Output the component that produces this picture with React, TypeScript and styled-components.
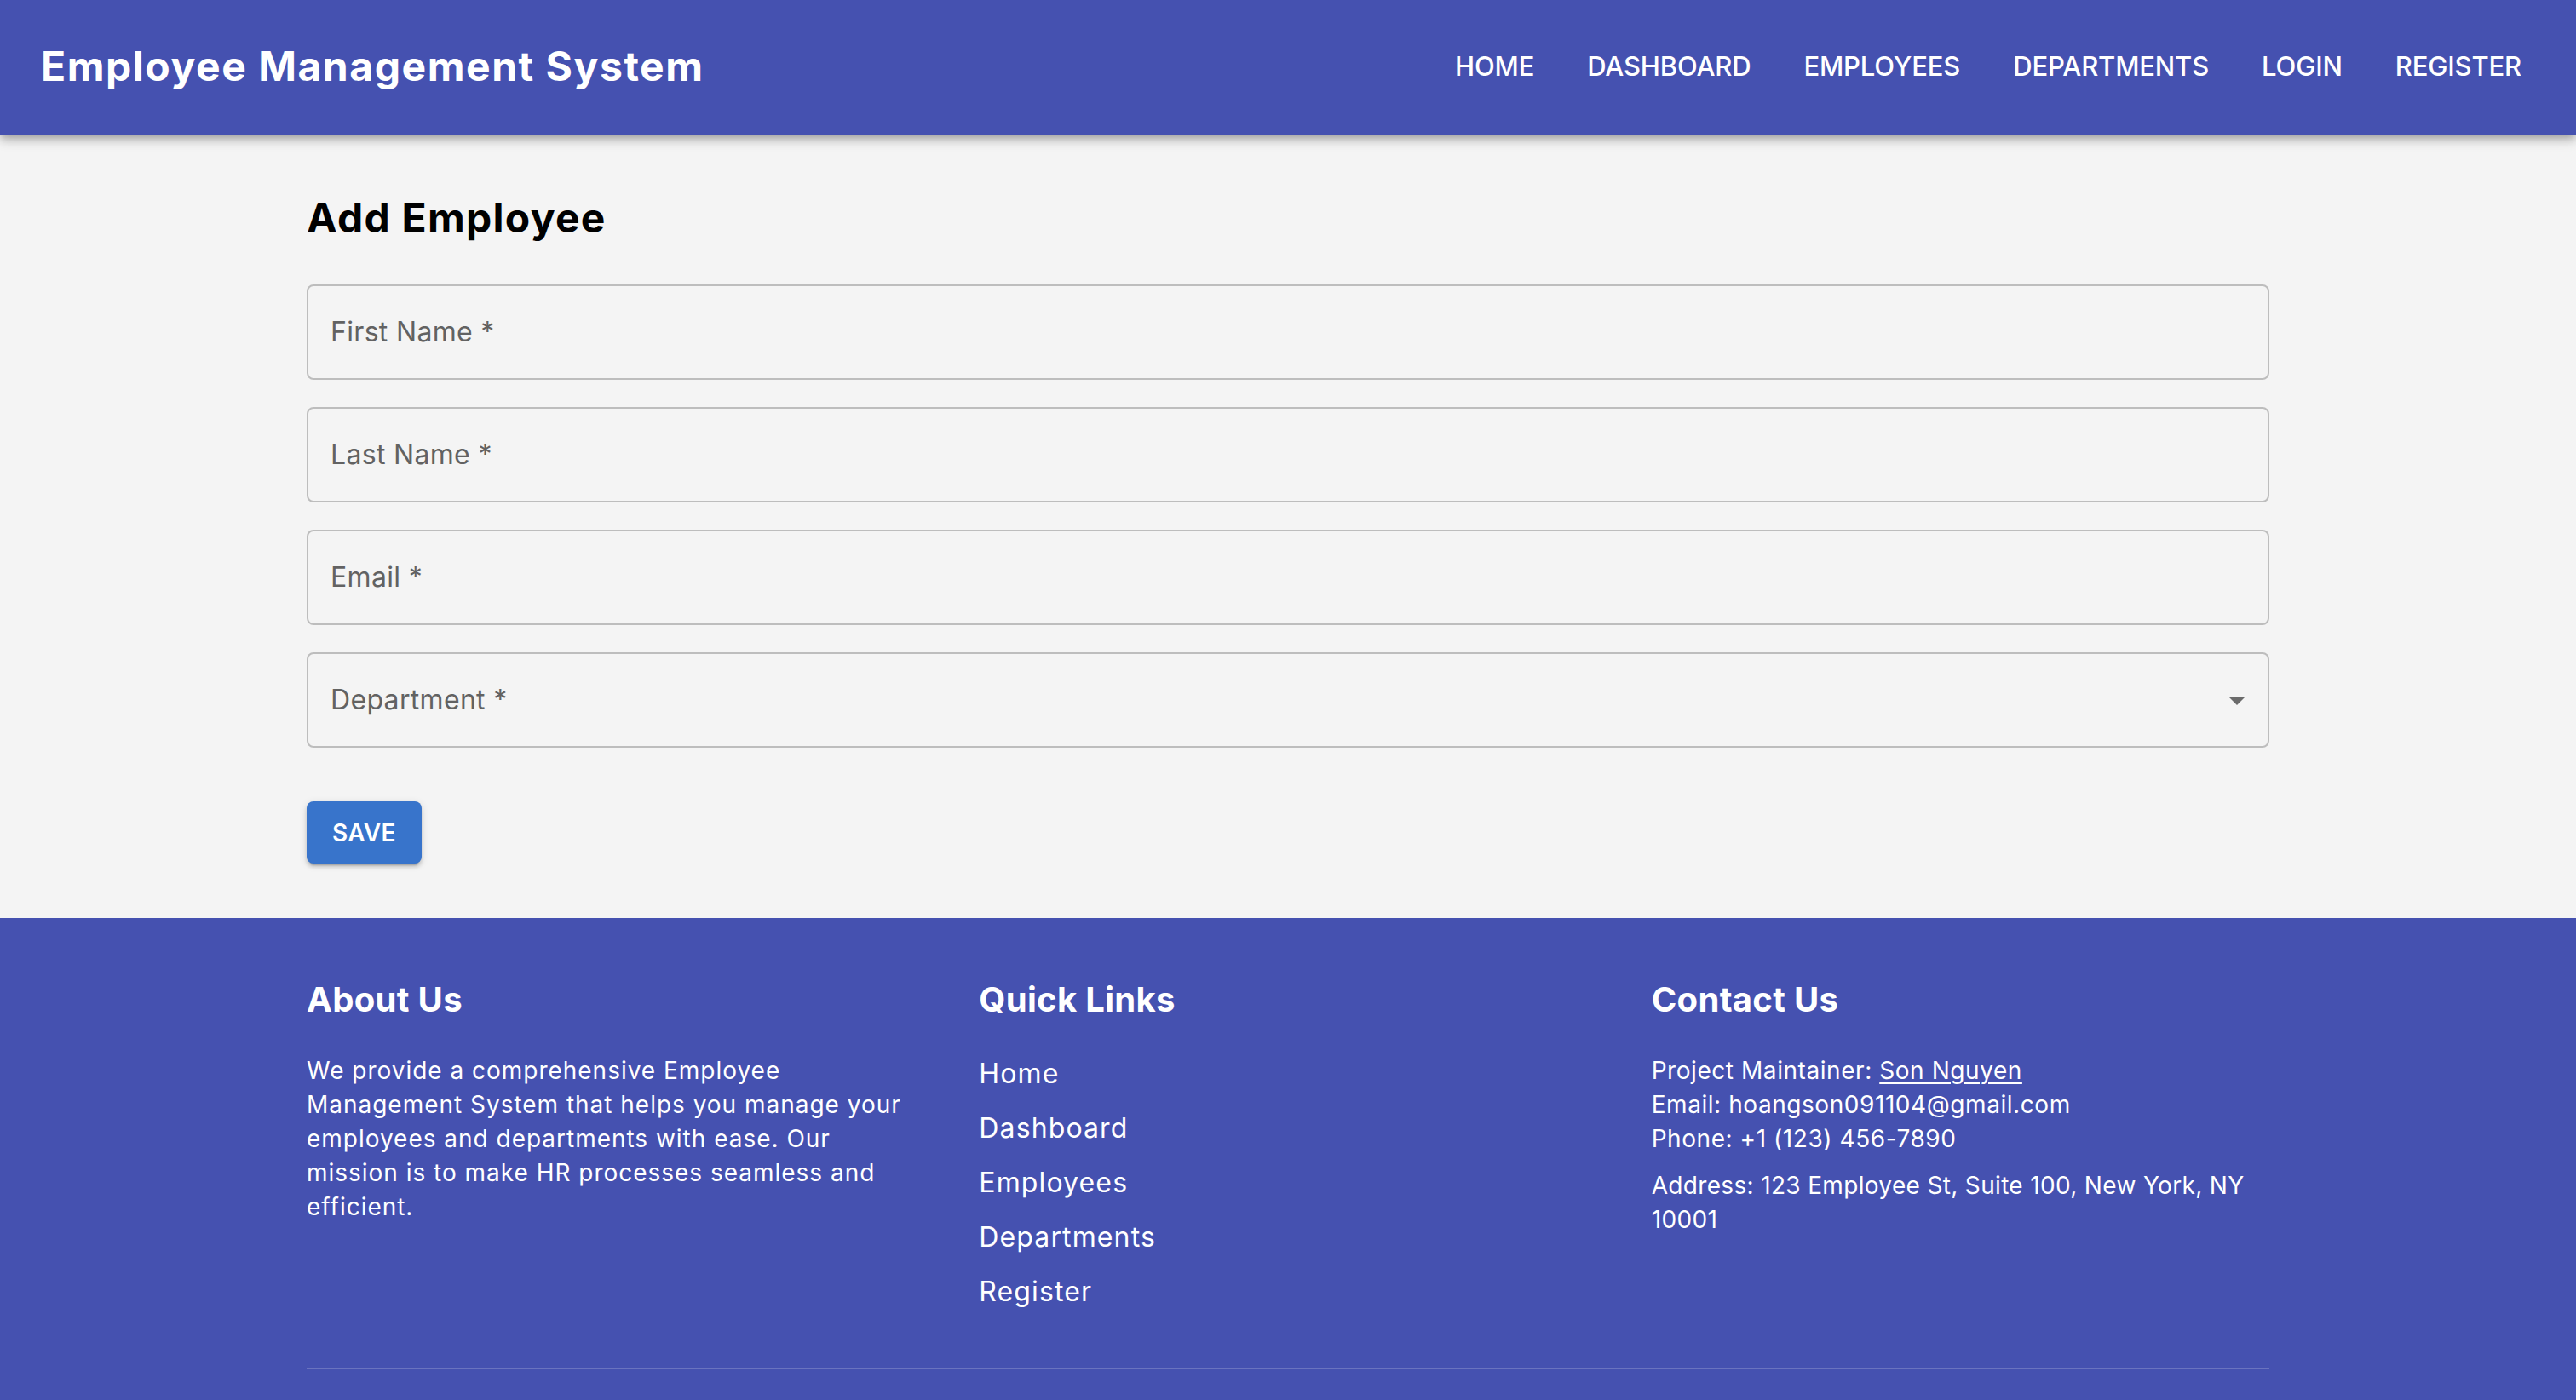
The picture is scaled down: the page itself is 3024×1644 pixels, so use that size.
import React from "react";
import styled, { createGlobalStyle } from "styled-components";

const GlobalStyle = createGlobalStyle`
  html, body { margin: 0; padding: 0; overflow: hidden; }
  body {
    font-family: "Inter", "Noto Sans", sans-serif;
    background: #f4f4f4;
    -webkit-font-smoothing: antialiased;
  }
  * { box-sizing: border-box; }
`;

const BRAND = "#4551b0";

const Page = styled.div`
  display: flex;
  flex-direction: column;
  min-height: 1644px;
`;

const AppBar = styled.header`
  position: relative;
  z-index: 2;
  height: 158px;
  background: ${BRAND};
  display: flex;
  align-items: center;
  justify-content: space-between;
  padding: 0 48px 2px;
  box-shadow: 0 4px 8px -2px rgba(0, 0, 0, 0.2), 0 8px 10px 0 rgba(0, 0, 0, 0.14),
    0 2px 20px 0 rgba(0, 0, 0, 0.12);
`;

const Brand = styled.h1`
  margin: 0;
  color: #fff;
  font-size: 48px;
  font-weight: 700;
  letter-spacing: 0.032em;
  line-height: 1;
`;

const Nav = styled.nav`
  display: flex;
  align-items: center;
  gap: 30px;
`;

const NavButton = styled.a`
  color: #fff;
  font-size: 31px;
  font-weight: 500;
  text-transform: uppercase;
  letter-spacing: -0.005em;
  padding: 12px 16px;
  line-height: 1.75;
  text-decoration: none;
  cursor: pointer;
`;

const Main = styled.main`
  background: #f4f4f4;
  padding: 66px 0 64px;
`;

const Container = styled.div`
  width: 2304px;
  margin: 0 auto;
`;

const Title = styled.h2`
  margin: 0 0 46px;
  font-size: 48px;
  font-weight: 700;
  line-height: 64px;
  color: #000;
  letter-spacing: 0.026em;
`;

const Form = styled.form`
  display: flex;
  flex-direction: column;
  gap: 32px;
`;

const FieldBox = styled.div`
  position: relative;
  height: 112px;
  border: 2px solid #bdbdbd;
  border-radius: 8px;
  display: flex;
  align-items: center;
  justify-content: space-between;
  padding: 0 12px 0 26px;
`;

const Label = styled.span`
  font-size: 32px;
  color: #626262;
  letter-spacing: 0.01em;
  line-height: 1.4375;
`;

const Arrow = styled.svg`
  width: 48px;
  height: 48px;
  fill: #6b6b6b;
`;

const Actions = styled.div`
  margin-top: 63px;
  display: flex;
`;

const SaveButton = styled.button`
  height: 73px;
  padding: 0 30px;
  border: none;
  border-radius: 8px;
  background: #3874cb;
  color: #fff;
  font-family: inherit;
  font-size: 28px;
  font-weight: 600;
  letter-spacing: 0.01em;
  text-transform: uppercase;
  cursor: pointer;
  box-shadow: 0 6px 2px -4px rgba(0, 0, 0, 0.2), 0 4px 4px 0 rgba(0, 0, 0, 0.14),
    0 2px 10px 0 rgba(0, 0, 0, 0.12);
`;

const Footer = styled.footer`
  flex: 1;
  background: ${BRAND};
  color: #fff;
  padding: 64px 0 35px;
`;

const Columns = styled.div`
  display: grid;
  grid-template-columns: repeat(3, 1fr);
  column-gap: 64px;
`;

const Column = styled.div`
  display: flex;
  flex-direction: column;
`;

const ColTitle = styled.h3`
  margin: 0 0 31px;
  font-size: 40px;
  font-weight: 700;
  line-height: 64px;
  letter-spacing: 0.008em;
`;

const Body = styled.p<{ $gap?: number; $tracking?: number }>`
  margin: ${(p) => p.$gap ?? 0}px 0 0;
  font-size: 28px;
  line-height: 40px;
  letter-spacing: ${(p) => p.$tracking ?? 0.035}em;
`;

const LinkList = styled.ul`
  list-style: none;
  margin: 0;
  padding: 0;
  display: flex;
  flex-direction: column;
  gap: 16px;
`;

const FooterLink = styled.a`
  color: #fff;
  font-size: 32px;
  line-height: 48px;
  letter-spacing: 0.035em;
  text-decoration: none;
`;

const Maintainer = styled.a`
  color: #fff;
  text-decoration: underline;
  text-underline-offset: 4px;
  text-decoration-thickness: 2px;
`;

const Divider = styled.hr`
  margin: 65px 0 0;
  border: none;
  height: 2px;
  background: rgba(255, 255, 255, 0.2);
`;

const navItems = ["Home", "Dashboard", "Employees", "Departments", "Login", "Register"];
const fields = [
  { label: "First Name *" },
  { label: "Last Name *" },
  { label: "Email *" },
  { label: "Department *", select: true },
];

function Field({ label, select }: { label: string; select?: boolean }) {
  return (
    <FieldBox>
      <Label>{label}</Label>
      {select && (
        <Arrow viewBox="0 0 24 24">
          <path d="M7 10l5 5 5-5z" />
        </Arrow>
      )}
    </FieldBox>
  );
}

export default function App() {
  return (
    <>
      <GlobalStyle />
      <Page>
        <AppBar>
          <Brand>Employee Management System</Brand>
          <Nav>
            {navItems.map((n) => (
              <NavButton key={n}>{n}</NavButton>
            ))}
          </Nav>
        </AppBar>
        <Main>
          <Container>
            <Title>Add Employee</Title>
            <Form onSubmit={(e) => e.preventDefault()}>
              {fields.map((f) => (
                <Field key={f.label} label={f.label} select={f.select} />
              ))}
            </Form>
            <Actions>
              <SaveButton type="button">Save</SaveButton>
            </Actions>
          </Container>
        </Main>
        <Footer>
          <Container>
            <Columns>
              <Column>
                <ColTitle>About Us</ColTitle>
                <Body>
                  We provide a comprehensive Employee Management System that helps you manage your
                  employees and departments with ease. Our mission is to make HR processes seamless
                  and efficient.
                </Body>
              </Column>
              <Column>
                <ColTitle>Quick Links</ColTitle>
                <LinkList>
                  {["Home", "Dashboard", "Employees", "Departments", "Register"].map((l) => (
                    <li key={l}>
                      <FooterLink>{l}</FooterLink>
                    </li>
                  ))}
                </LinkList>
              </Column>
              <Column>
                <ColTitle>Contact Us</ColTitle>
                <Body $tracking={0.02}>
                  Project Maintainer: <Maintainer>Son Nguyen</Maintainer>
                  <br />
                  Email: hoangson091104@gmail.com
                  <br />
                  Phone: +1 (123) 456-7890
                </Body>
                <Body $gap={15} $tracking={0.012}>
                  Address: 123 Employee St, Suite 100, New York, NY 10001
                </Body>
              </Column>
            </Columns>
            <Divider />
          </Container>
        </Footer>
      </Page>
    </>
  );
}
